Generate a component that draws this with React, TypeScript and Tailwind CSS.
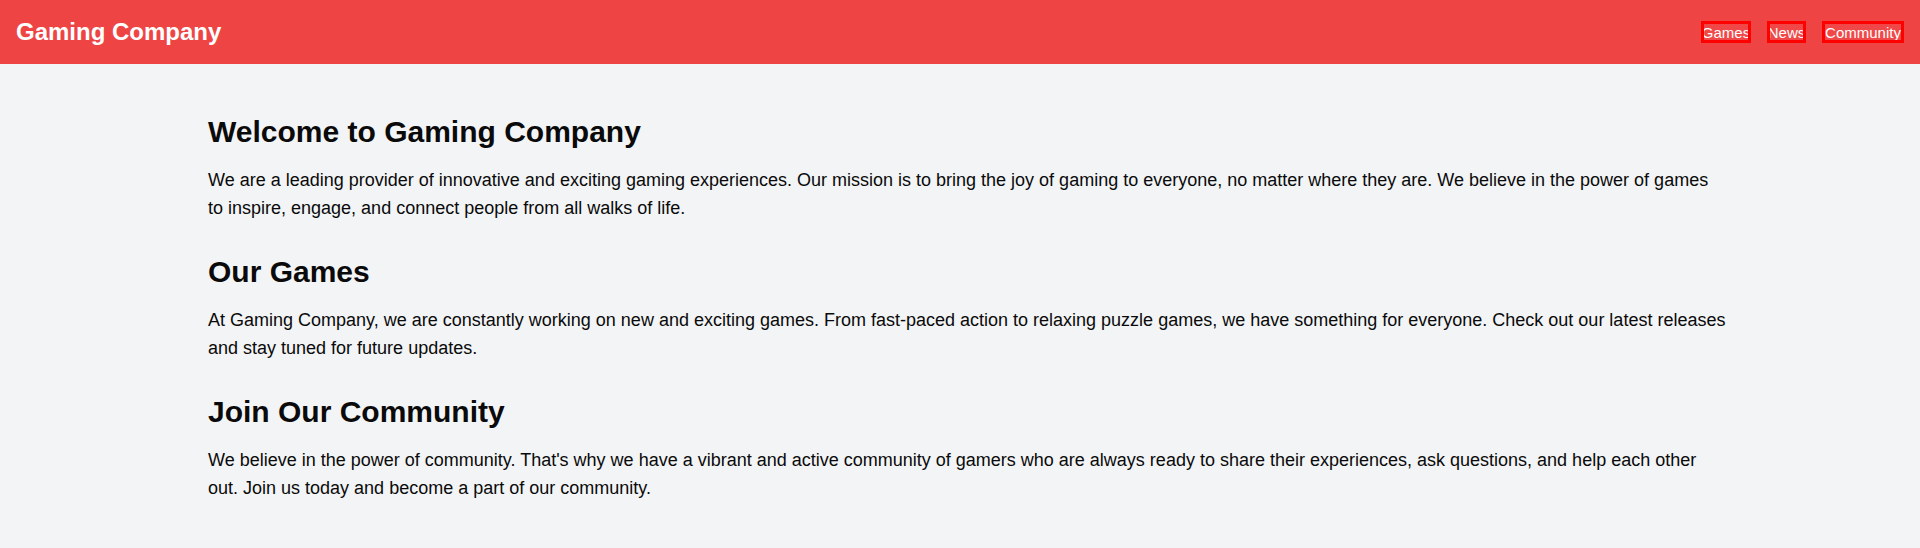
const navLinks = [
  { label: 'Games', width: 'w-[50px]' },
  { label: 'News', width: 'w-[39px]' },
  { label: 'Community', width: 'w-[82px]' },
];

const sections = [
  {
    title: 'Welcome to Gaming Company',
    lines: [
      'We are a leading provider of innovative and exciting gaming experiences. Our mission is to bring the joy of gaming to everyone, no matter where they are. We believe in the power of games',
      'to inspire, engage, and connect people from all walks of life.',
    ],
  },
  {
    title: 'Our Games',
    lines: [
      'At Gaming Company, we are constantly working on new and exciting games. From fast-paced action to relaxing puzzle games, we have something for everyone. Check out our latest releases',
      'and stay tuned for future updates.',
    ],
  },
  {
    title: 'Join Our Community',
    lines: [
      "We believe in the power of community. That's why we have a vibrant and active community of gamers who are always ready to share their experiences, ask questions, and help each other",
      'out. Join us today and become a part of our community.',
    ],
  },
];

export default function App() {
  return (
    <div className="min-h-screen bg-[#f3f4f6] text-[#0a0a0a] font-['Liberation_Sans',Arial,sans-serif]">
      <header className="bg-[#ef4444] text-white flex items-center justify-between px-4 h-16">
        <h1 className="text-2xl font-bold">Gaming Company</h1>
        <nav className="flex items-center gap-4">
          {navLinks.map((link) => (
            <a
              key={link.label}
              href="#"
              className={`${link.width} h-[22px] border-[3px] border-[#ff0000] bg-[#f04848] overflow-hidden flex items-center justify-center whitespace-nowrap text-[15px] leading-none text-white`}
            >
              {link.label}
            </a>
          ))}
        </nav>
      </header>

      <main className="container mx-auto px-4 pt-[50px] pb-4">
        {sections.map((section) => (
          <section key={section.title} className="mb-8">
            <h2 className="text-3xl font-bold mb-4">{section.title}</h2>
            <p className="text-lg whitespace-nowrap">
              {section.lines[0]}
              <br />
              {section.lines[1]}
            </p>
          </section>
        ))}
      </main>
    </div>
  );
}
